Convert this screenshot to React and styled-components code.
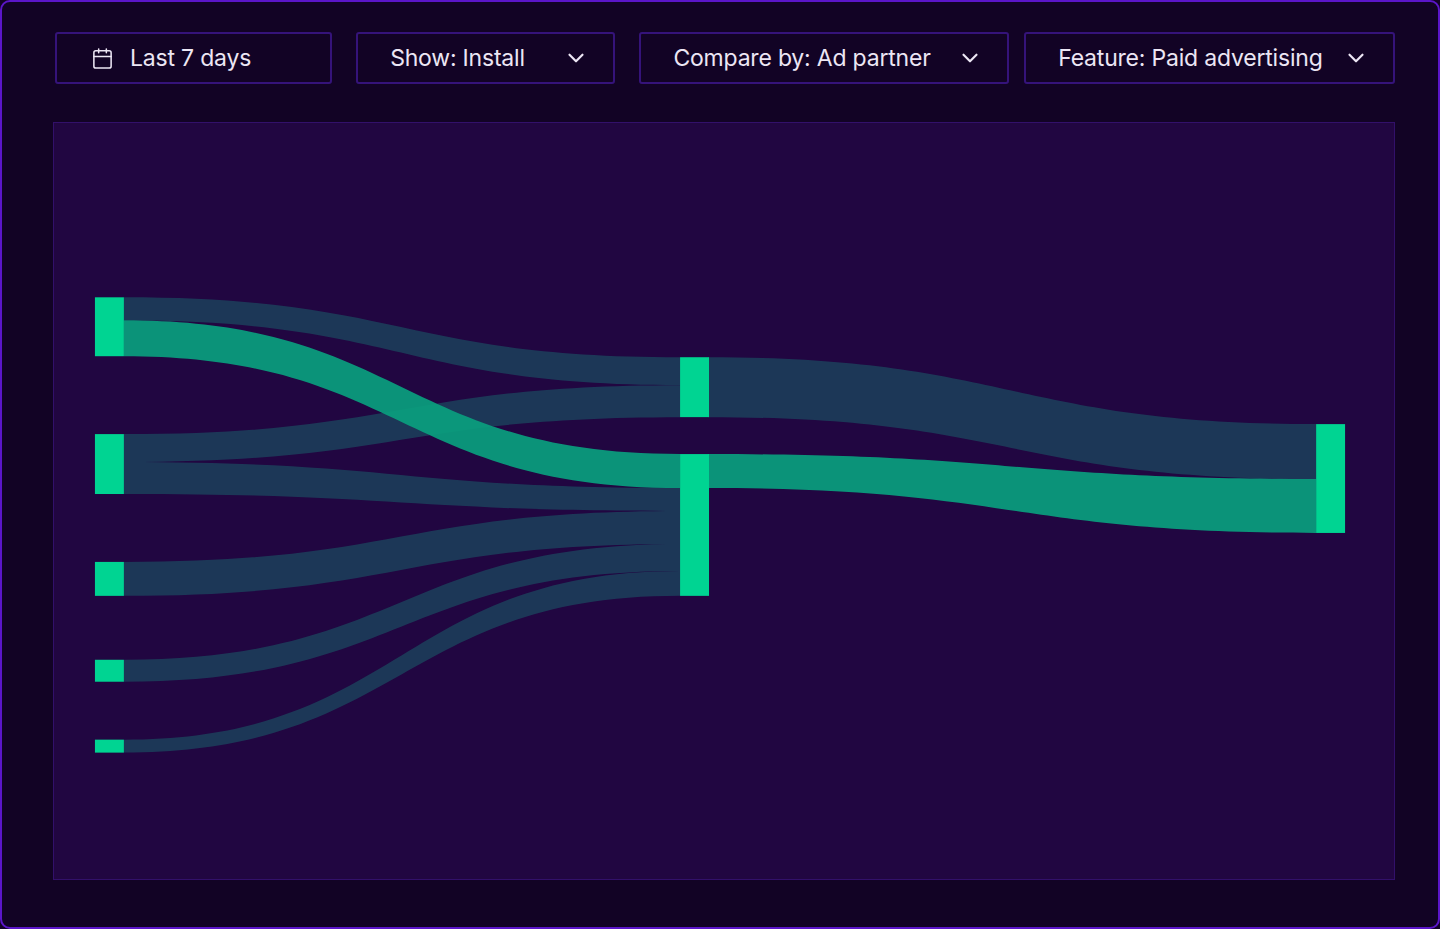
import React from "react";
import styled, { createGlobalStyle } from "styled-components";
import { Calendar, ChevronDown } from "lucide-react";

const Global = createGlobalStyle`
  html, body { margin: 0; padding: 0; background: #130326; }
  * { box-sizing: border-box; }
`;

const Frame = styled.div`
  width: 1440px;
  height: 929px;
  border: 2px solid #5b16c9;
  border-radius: 10px;
  background: #120325;
  padding: 30px 43px 47px 51px;
  display: flex;
  flex-direction: column;
  gap: 38px;
  font-family: Inter, "Liberation Sans", sans-serif;
`;

const Toolbar = styled.div`
  display: flex;
  align-items: center;
  gap: 24px;
  padding-left: 2px;
`;

const Select = styled.div`
  width: ${(p) => p.w}px;
  height: 52px;
  margin-right: ${(p) => p.mr || 0}px;
  border: 2px solid #35137a;
  border-radius: 3px;
  display: flex;
  align-items: center;
  justify-content: ${(p) => (p.start ? "flex-start" : "space-between")};
  gap: 16px;
  padding: 0 ${(p) => (p.start ? 20 : 24)}px 0 ${(p) => (p.start ? 34 : 32)}px;
  color: #ece6f4;
  font-size: 23px;
  letter-spacing: -0.2px;
`;

const Panel = styled.div`
  flex: 1;
  background: #210641;
  border: 1px solid #32106a;
  overflow: hidden;
`;

const NODE = "#00d492";
const DARK = "#1c3a59";
const GREEN = "#0aa07e";

const nodes = [
  [94, 298, 357], [94, 435, 495], [94, 563, 597], [94, 661, 683], [94, 741, 754],
  [680, 358, 418], [680, 455, 597], [1317, 425, 534],
];

const links = [
  [123, 298, 321, 680, 358, 386, DARK],
  [123, 435, 463, 680, 386, 418, DARK],
  [123, 463, 495, 680, 489, 512, DARK],
  [123, 563, 597, 680, 512, 545, DARK],
  [123, 661, 683, 680, 545, 572, DARK],
  [123, 741, 754, 680, 572, 597, DARK],
  [123, 321, 357, 680, 455, 489, GREEN],
  [708, 358, 418, 1317, 425, 480, DARK],
  [708, 455, 489, 1317, 480, 534, GREEN],
];

const band = ([x0, a0, a1, x1, b0, b1]) => {
  const m = (x0 + x1) / 2;
  return `M${x0} ${a0} C${m} ${a0} ${m} ${b0} ${x1} ${b0} L${x1} ${b1} C${m} ${b1} ${m} ${a1} ${x0} ${a1} Z`;
};

const Sankey = () => (
  <svg width="100%" height="100%" viewBox="53 124 1342 756">
    {links.map((l, i) => (
      <path key={i} d={band(l)} fill={l[6]} opacity={l[6] === GREEN ? 0.92 : 0.95} />
    ))}
    {nodes.map(([x, y0, y1], i) => (
      <rect key={i} x={x} y={y0} width={29} height={y1 - y0} fill={NODE} />
    ))}
  </svg>
);

export default function App() {
  return (
    <>
      <Global />
      <Frame>
        <Toolbar>
          <Select w={278} start>
            <Calendar size={23} strokeWidth={1.6} />
            Last 7 days
          </Select>
          <Select w={260}>
            Show: Install <ChevronDown size={26} strokeWidth={2} />
          </Select>
          <Select w={371} mr={-9}>
            Compare by: Ad partner <ChevronDown size={26} strokeWidth={2} />
          </Select>
          <Select w={372}>
            Feature: Paid advertising <ChevronDown size={26} strokeWidth={2} />
          </Select>
        </Toolbar>
        <Panel>
          <Sankey />
        </Panel>
      </Frame>
    </>
  );
}
